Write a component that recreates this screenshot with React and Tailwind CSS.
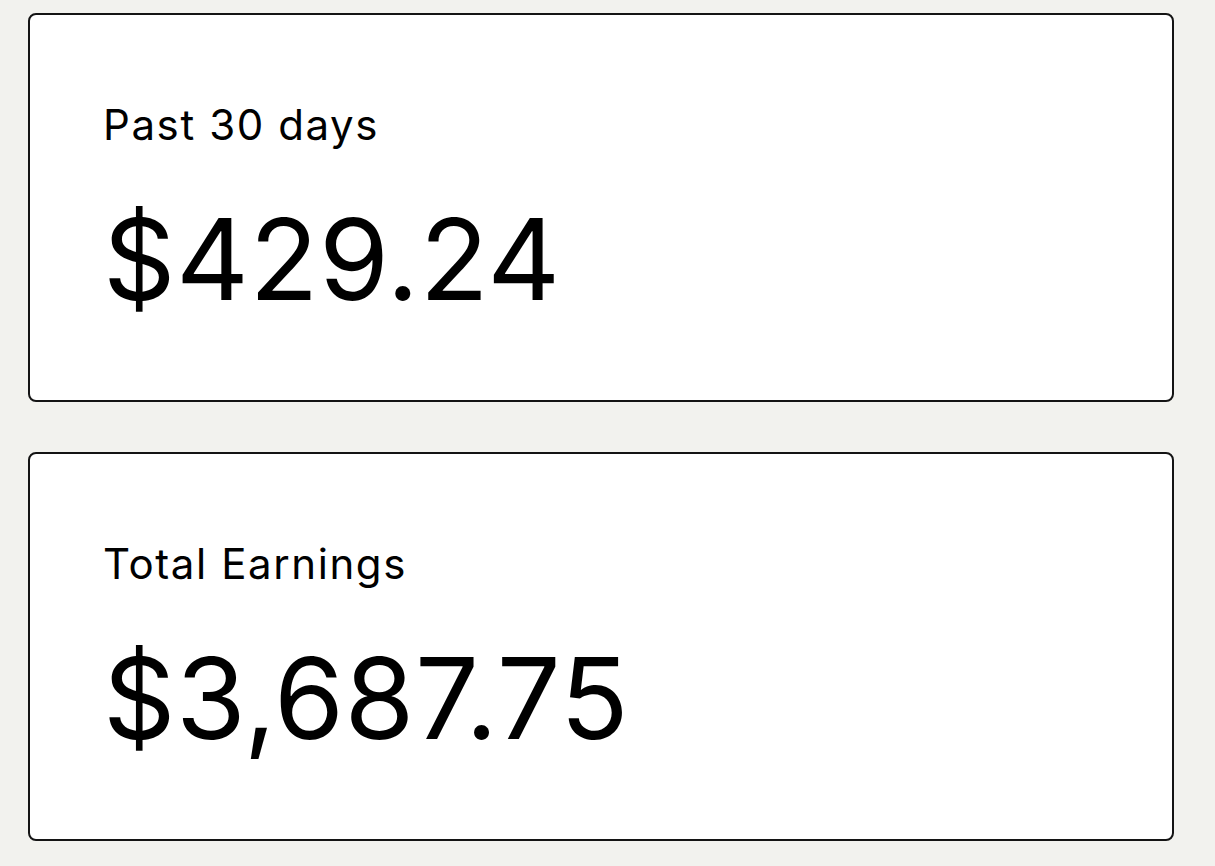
import React from "react";

const stats = [
  { label: "Past 30 days", value: "$429.24" },
  { label: "Total Earnings", value: "$3,687.75" },
];

const App = () => {
  return (
    <div
      className="min-h-screen bg-[#f2f2ee] text-black pt-[13px] pl-[28px] pr-[41px]"
      style={{ fontFamily: "Inter, 'Liberation Sans', sans-serif" }}
    >
      <div className="flex flex-col gap-[50px]">
        {stats.map((s, i) => (
          <div
            key={i}
            className="h-[389px] bg-white border-2 border-[#141414] rounded-lg pt-[89px] pl-[73px]"
          >
            <p className="text-[42px] leading-none tracking-[1.6px]">{s.label}</p>
            <p className="mt-[57px] text-[113px] leading-none tracking-[0.5px]">
              {s.value}
            </p>
          </div>
        ))}
      </div>
    </div>
  );
};

export default App;
